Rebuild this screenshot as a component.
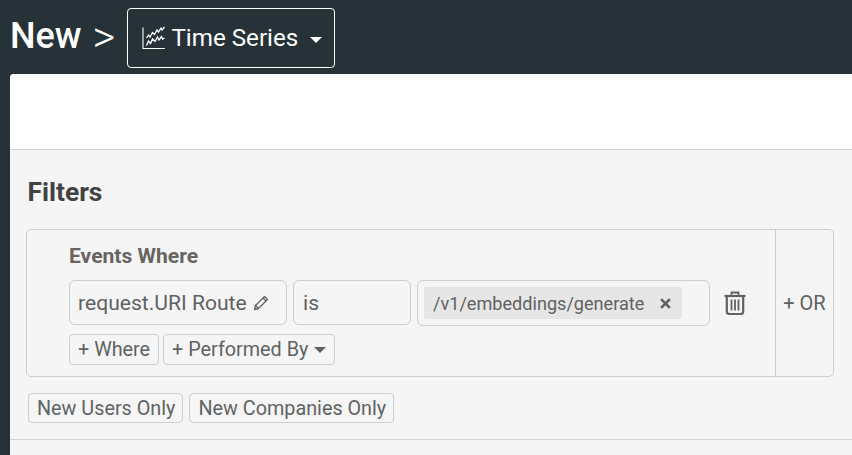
<script>
</script>

<div class="page">
  <header class="top">
    <h1>New</h1>
    <span class="chev">&gt;</span>
    <button class="type">
      <svg class="chart" viewBox="0 0 24 24" width="24" height="24" fill="none" stroke="currentColor">
        <path d="M1 1.500V22.500H23" stroke-width="1.100"/>
        <path d="M4.500 12L6.500 9L8 11L10.500 6.500L12.500 8.500L15 4L16.500 6L19 2L20 4L22.500 1" stroke-width="1.300"/>
        <path d="M4.500 19.500L6.500 15L8.500 17.500L10.500 13L13 15.500L15.500 11L17 14L19.500 10.500L20.500 13L22.500 12" stroke-width="1.300"/>
      </svg>
      <span>Time Series</span>
      <i class="caret"></i>
    </button>
  </header>
  <main class="card">
    <div class="blank"></div>
    <section class="filters">
      <h2>Filters</h2>
      <div class="box">
        <div class="rules">
          <div class="label">Events Where</div>
          <div class="row">
            <div class="field f1">
              request.URI Route
              <svg viewBox="0 0 16 16" width="16" height="16" fill="none" stroke="currentColor" stroke-width="1.300" stroke-linejoin="round">
                <path d="M1.500 14.500L2.500 10.500L11.500 1.500L14.500 4.500L5.500 13.500Z"/>
                <path d="M2.500 10.500L5.500 13.500M10 3L13 6"/>
              </svg>
            </div>
            <div class="field f2">is</div>
            <div class="field f3">
              <span class="tag">/v1/embeddings/generate
                <svg viewBox="0 0 10 10" width="11" height="11" stroke="currentColor" stroke-width="2.400"><path d="M1 1L9 9M9 1L1 9"/></svg>
              </span>
            </div>
            <svg class="trash" viewBox="0 0 22 24" width="22" height="24" fill="none" stroke="currentColor" stroke-width="2.200">
              <path d="M0.500 5H21.500" stroke-width="2.200"/>
              <path d="M7.500 4V1.500H14.500V4" stroke-width="1.800"/>
              <path d="M2.800 6V20.500A2.500 2.500 0 0 0 5.300 23H16.700A2.500 2.500 0 0 0 19.200 20.500V6"/>
              <path d="M7.500 8.500V19.500M11 8.500V19.500M14.500 8.500V19.500" stroke-width="1.800"/>
            </svg>
          </div>
          <div class="actions">
            <button class="btn">+ Where</button>
            <button class="btn">+ Performed By<i class="caret small"></i></button>
          </div>
        </div>
        <div class="or">+ OR</div>
      </div>
      <div class="only">
        <button class="btn tall">New Users Only</button>
        <button class="btn tall">New Companies Only</button>
      </div>
    </section>
  </main>
</div>

<style>
  :global(body) {
    margin: 0;
    background: #263238;
    font-family: Roboto, sans-serif;
    overflow: hidden;
  }
  .page {
    width: 852px;
    height: 455px;
    overflow: hidden;
  }
  .top {
    height: 74px;
    display: flex;
    align-items: center;
    color: #fff;
    padding-left: 10px;
    box-sizing: border-box;
  }
  h1 {
    margin: 0;
    font-size: 36px;
    font-weight: 500;
    line-height: 1;
    position: relative;
    top: -1px;
  }
  .chev {
    font-size: 44px;
    font-weight: 300;
    margin-left: 11px;
    margin-right: 12px;
    line-height: 1;
  }
  .type {
    width: 208px;
    height: 60px;
    box-sizing: border-box;
    border: 1px solid #fff;
    border-radius: 4px;
    background: transparent;
    color: #fff;
    font: 400 24.200px Roboto, sans-serif;
    display: flex;
    align-items: center;
    padding: 0 0 0 14px;
    margin-top: 2px;
  }
  .chart {
    margin-right: 5px;
    flex: none;
  }
  .caret {
    display: block;
    width: 0;
    height: 0;
    border: 6px solid transparent;
    border-top-color: #fff;
    border-bottom: 0;
    margin-left: 12px;
    margin-top: 3px;
  }
  .caret.small {
    border-width: 6.500px;
    border-bottom: 0;
    border-top-color: #616161;
    margin: 0 0 0 6px;
  }
  .card {
    margin-left: 10px;
    height: 381px;
    border-top-left-radius: 4px;
    background: #f5f5f5;
    overflow: hidden;
    display: flex;
    flex-direction: column;
  }
  .blank {
    height: 75px;
    background: #fff;
    border-bottom: 1px solid #cfd4d4;
    flex: none;
  }
  .filters {
    height: 290px;
    box-sizing: border-box;
    border-bottom: 1px solid #cfd4d4;
    padding: 0 18px 0 16px;
    flex: none;
  }
  h2 {
    margin: 27px 0 0 1.500px;
    line-height: 30px;
    font-weight: 700;
    font-size: 26.400px;
    color: #424242;
  }
  .box {
    margin-top: 22px;
    height: 148px;
    box-sizing: border-box;
    border: 1px solid #c8cfcf;
    border-radius: 5px;
    display: flex;
  }
  .rules {
    width: 749px;
    box-sizing: border-box;
    padding: 13px 0 0 42px;
    border-right: 1px solid #c8cfcf;
  }
  .label {
    font-size: 21.100px;
    font-weight: 700;
    line-height: 26px;
    color: #686461;
  }
  .row {
    display: flex;
    align-items: flex-start;
    gap: 6px;
    margin-top: 11px;
    color: #616161;
  }
  .field {
    height: 45px;
    box-sizing: border-box;
    border: 1px solid #c8cfcf;
    border-radius: 6px;
    display: flex;
    align-items: center;
    font-size: 21.100px;
    padding-left: 8px;
  }
  .f1 { width: 218px; gap: 6px; }
  .f2 { width: 118px; padding-left: 9px; }
  .f3 { width: 293px; padding-left: 6px; height: 46px; }
  .tag {
    width: 258px;
    height: 32px;
    box-sizing: border-box;
    background: #e6e6e6;
    border-radius: 3px;
    display: flex;
    align-items: center;
    justify-content: space-between;
    padding: 0 11px 0 9px;
    font-size: 18.100px;
  }
  .trash {
    margin: 11px 0 0 8px;
    flex: none;
  }
  .actions {
    display: flex;
    gap: 4px;
    margin-top: 8px;
  }
  .btn {
    height: 31px;
    box-sizing: border-box;
    border: 1px solid #c8cfcf;
    border-radius: 4px;
    background: transparent;
    color: #5f6363;
    font: 400 19.800px Roboto, sans-serif;
    padding: 0 8px;
    display: flex;
    align-items: center;
    white-space: nowrap;
  }
  .or {
    flex: 1;
    display: flex;
    align-items: center;
    justify-content: center;
    font-size: 20px;
    color: #616161;
    padding-bottom: 1px;
  }
  .only {
    display: flex;
    gap: 6px;
    margin: 16px 0 0 2px;
  }
  .tall {
    height: 30px;
    padding: 0 7px 0 8px;
  }
</style>
